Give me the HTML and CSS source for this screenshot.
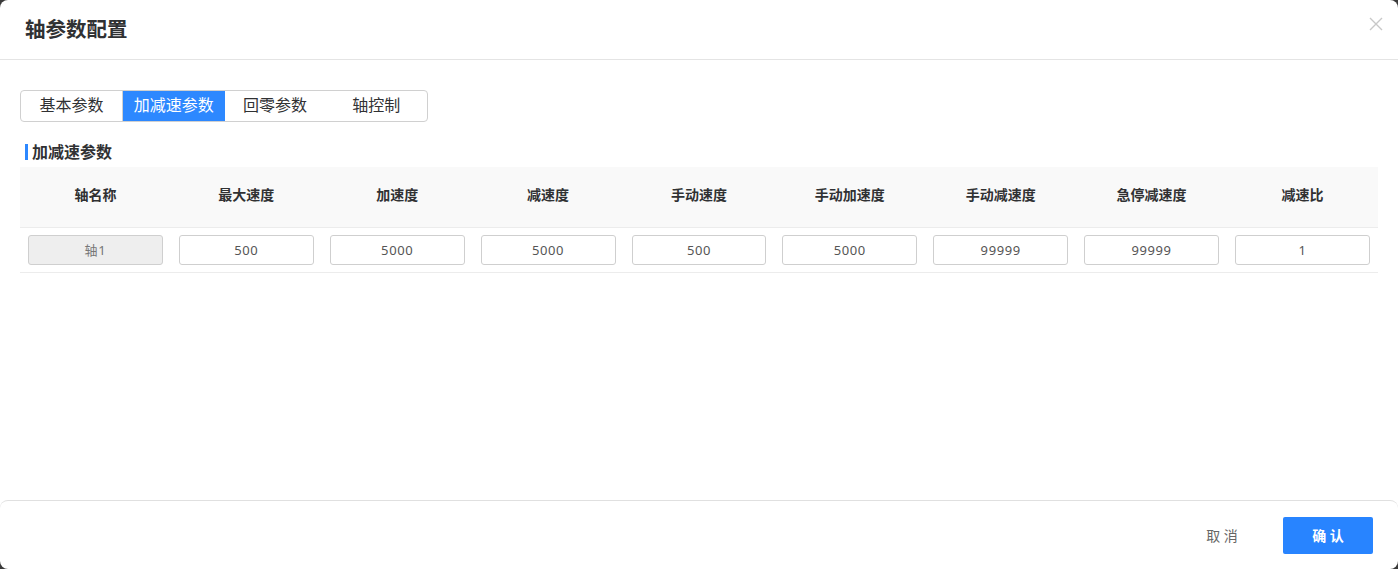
FILE: index.html
```html
<!DOCTYPE html>
<html>
<head>
  <meta charset="utf-8">
  <title>轴参数配置</title>
  <link rel="stylesheet" href="styles.css">
</head>
<body>
  <div class="dialog">
    <div class="header">
      <span class="title">轴参数配置</span>
      <span class="close">
        <svg width="14" height="14" viewBox="0 0 14 14"><path d="M1 1L13 13M13 1L1 13" stroke="#c8c8c8" stroke-width="1.4" fill="none"/></svg>
      </span>
    </div>

    <div class="body">
      <div class="tabs">
        <div class="tab">基本参数</div>
        <div class="tab active">加减速参数</div>
        <div class="tab">回零参数</div>
        <div class="tab">轴控制</div>
      </div>

      <div class="section-title">加减速参数</div>

      <table class="grid">
        <thead>
          <tr>
            <th>轴名称</th>
            <th>最大速度</th>
            <th>加速度</th>
            <th>减速度</th>
            <th>手动速度</th>
            <th>手动加速度</th>
            <th>手动减速度</th>
            <th>急停减速度</th>
            <th>减速比</th>
          </tr>
        </thead>
        <tbody>
          <tr>
            <td><input class="cell disabled" value="轴1" disabled></td>
            <td><input class="cell" value="500"></td>
            <td><input class="cell" value="5000"></td>
            <td><input class="cell" value="5000"></td>
            <td><input class="cell" value="500"></td>
            <td><input class="cell" value="5000"></td>
            <td><input class="cell" value="99999"></td>
            <td><input class="cell" value="99999"></td>
            <td><input class="cell" value="1"></td>
          </tr>
        </tbody>
      </table>
    </div>

    <div class="footer">
      <button class="btn cancel">取 消</button>
      <button class="btn ok">确 认</button>
    </div>
  </div>
</body>
</html>
```

FILE: styles.css
```css
body {
  margin: 0;
  background: #3a3a3a;
  font-family: "Noto Sans", "Noto Sans CJK SC", sans-serif;
}

.dialog {
  height: 569px;
  background: #fff;
  border-radius: 8px;
  display: flex;
  flex-direction: column;
  overflow: hidden;
}

.header {
  height: 59px;
  border-bottom: 1px solid #e4e4e4;
  display: flex;
  align-items: center;
  justify-content: space-between;
  padding: 0 15px 0 25px;
  flex-shrink: 0;
}

.title {
  font-size: 20.5px;
  font-weight: bold;
  color: #303133;
  margin-top: -4px;
}

.close {
  display: flex;
  margin-top: -12px;
}

.body {
  flex: 1;
  padding: 30px 20px 0 20px;
}

.tabs {
  display: flex;
  width: 406px;
  height: 30px;
  border: 1px solid #d0d0d0;
  border-radius: 4px;
  overflow: hidden;
}

.tab {
  width: 102px;
  text-align: center;
  font-size: 16px;
  line-height: 29px;
  color: #303133;
}

.tab.active {
  background: #2d88ff;
  color: #fff;
  border-left: 1px solid #d0d0d0;
}

.section-title {
  margin: 22px 0 7px 5px;
  padding-left: 4px;
  border-left: 3px solid #2d88ff;
  font-size: 16px;
  font-weight: bold;
  color: #303133;
  line-height: 16px;
}

.grid {
  width: 100%;
  border-collapse: collapse;
  table-layout: fixed;
}

.grid th {
  background: #f9f9f9;
  height: 60px;
  font-size: 14px;
  font-weight: bold;
  color: #303133;
  border-bottom: 1px solid #ececec;
  padding: 0 0 5px 0;
  box-sizing: border-box;
}

.grid td {
  height: 44px;
  padding: 0 8px;
  border-bottom: 1px solid #ececec;
}

.cell {
  display: block;
  width: 100%;
  box-sizing: border-box;
  height: 30px;
  border: 1px solid #cfcfcf;
  border-radius: 3px;
  text-align: center;
  font-family: "Noto Sans", "Noto Sans CJK SC", sans-serif;
  font-size: 13px;
  letter-spacing: 0.6px;
  color: #555;
  background: #fff;
}

.cell.disabled {
  background: #eeeeee;
  color: #777;
}

.footer {
  height: 68px;
  border-top: 1px solid #e0e0e0;
  border-radius: 8px 8px 0 0;
  display: flex;
  align-items: center;
  justify-content: flex-end;
  padding-right: 25px;
  flex-shrink: 0;
}

.btn {
  font-family: "Noto Sans", "Noto Sans CJK SC", sans-serif;
  font-size: 14px;
  border: none;
  cursor: pointer;
  height: 37px;
}

.cancel {
  background: none;
  color: #666;
  width: 90px;
  margin-right: 16px;
}

.ok {
  width: 90px;
  background: #2884ff;
  color: #fff;
  font-weight: bold;
  border-radius: 2px;
}
```
